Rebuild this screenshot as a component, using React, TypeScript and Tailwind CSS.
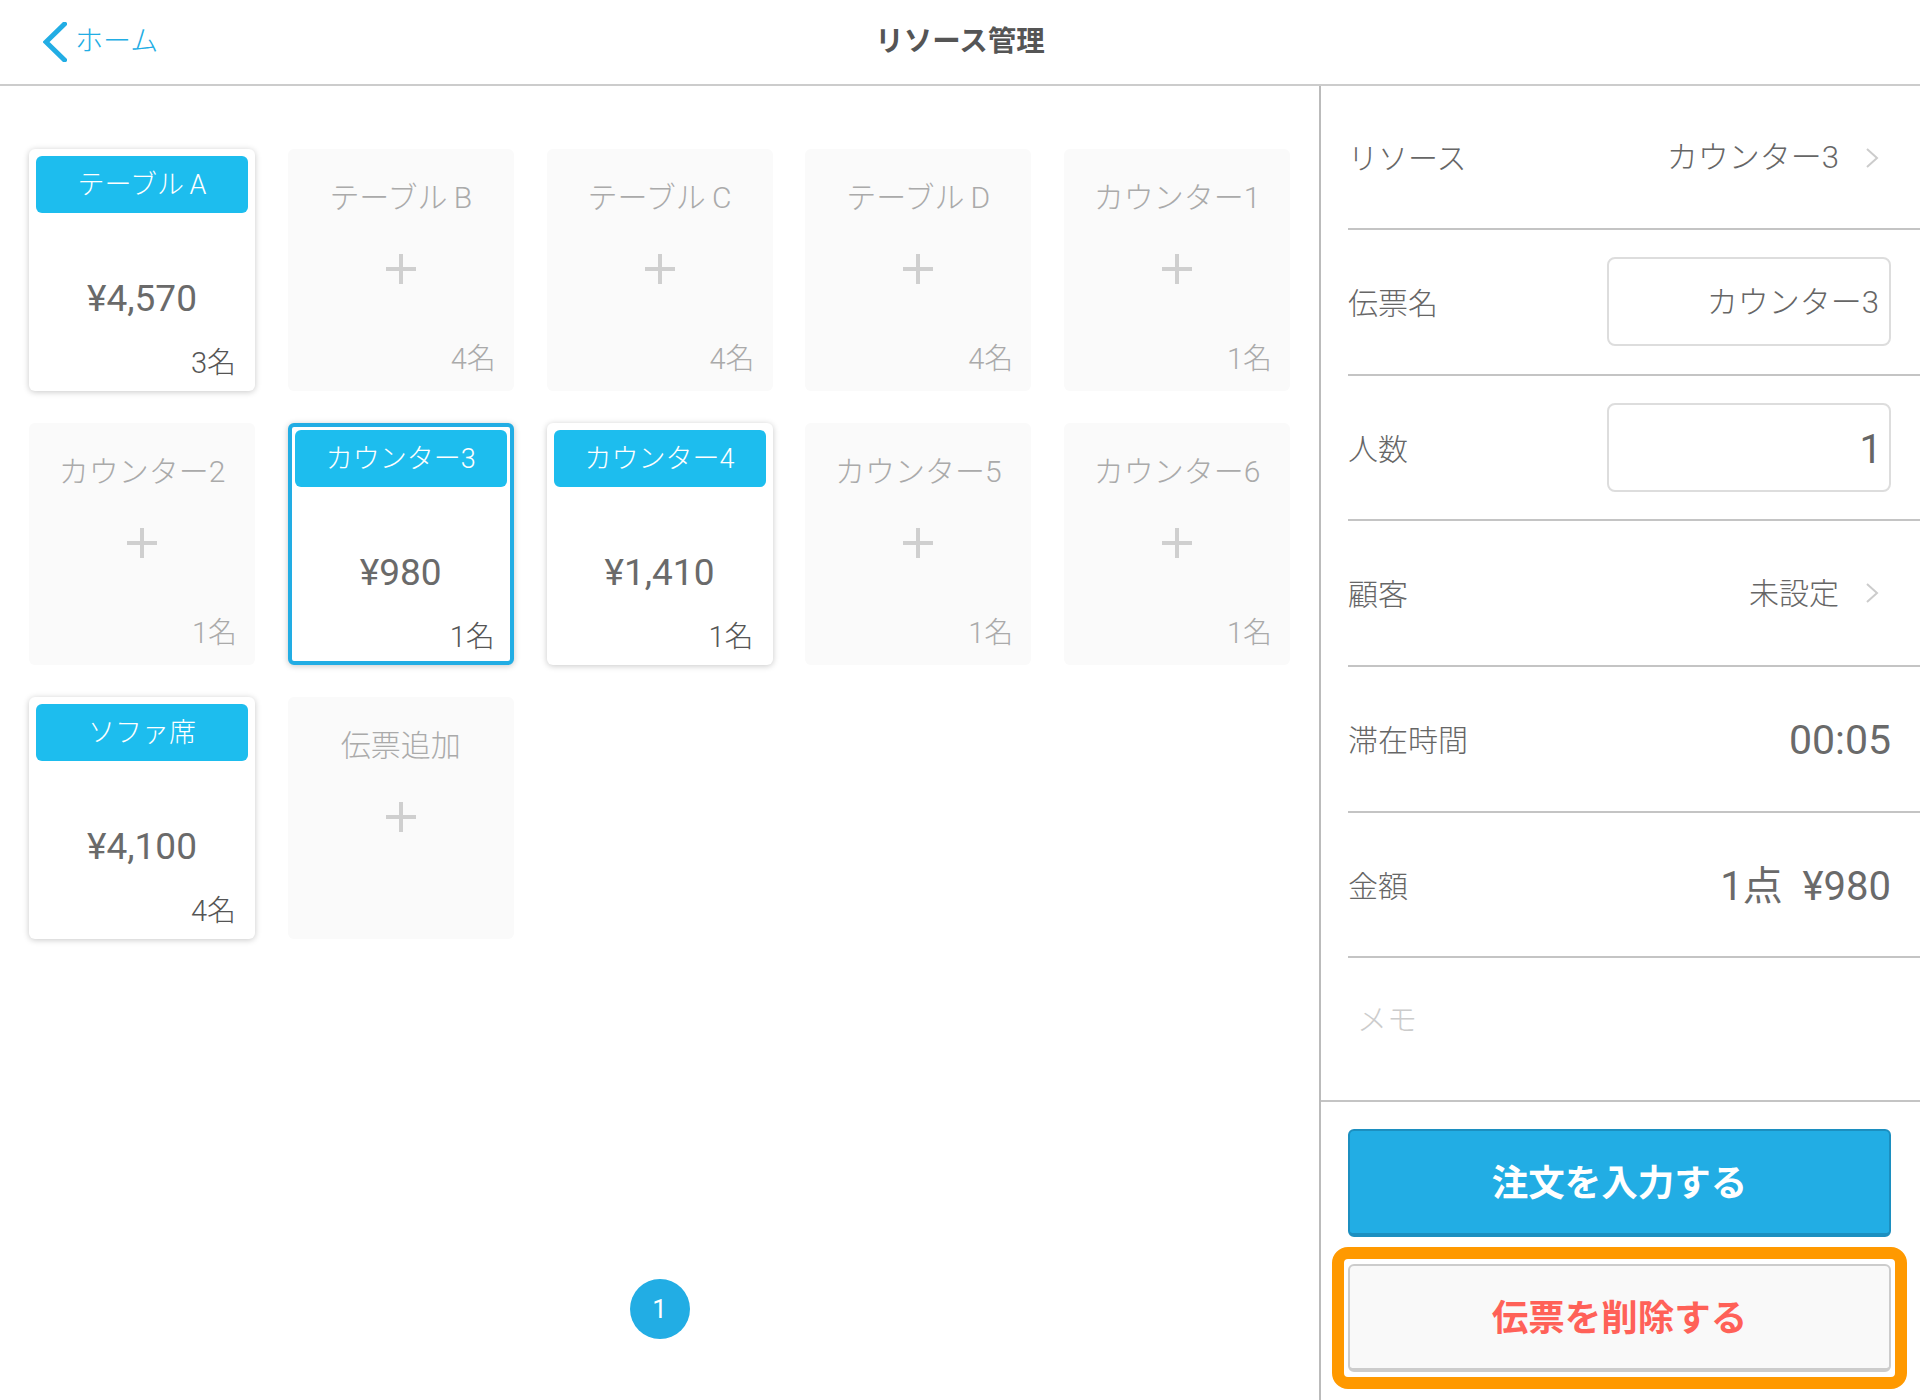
const tables = [
  { name: "テーブル\u2009A", price: "¥4,570", count: "3名" },
  { name: "テーブル\u2009B", count: "4名" },
  { name: "テーブル\u2009C", count: "4名" },
  { name: "テーブル\u2009D", count: "4名" },
  { name: "カウンター1", count: "1名" },
  { name: "カウンター2", count: "1名" },
  { name: "カウンター3", price: "¥980", count: "1名", selected: true },
  { name: "カウンター4", price: "¥1,410", count: "1名" },
  { name: "カウンター5", count: "1名" },
  { name: "カウンター6", count: "1名" },
  { name: "ソファ席", price: "¥4,100", count: "4名" },
  { name: "伝票追加", count: "" },
]

function Plus() {
  return (
    <svg width="30" height="30" viewBox="0 0 30 30" className="mx-auto mt-9 shrink-0">
      <path d="M15 0v30M0 15h30" stroke="#cfcfcf" strokeWidth="4" />
    </svg>
  )
}

function Card({ name, price, count, selected }: { name: string; price?: string; count: string; selected?: boolean }) {
  if (!price) {
    return (
      <div className="flex h-[242px] flex-col rounded-md bg-[#fafafa] pt-[29px]">
        <div className="text-center text-[30px] leading-10 text-[#aaaaaa]">{name}</div>
        <Plus />
        <div className="mt-auto mb-3 h-10 pr-[18px] text-right text-[29px] leading-10 text-[#aaaaaa]">{count}</div>
      </div>
    )
  }
  return (
    <div
      className={`flex h-[242px] flex-col rounded-md bg-white shadow-[0_1px_6px_rgba(0,0,0,0.22)] ${
        selected ? "border-4 border-[#22ade4] p-[3px]" : "p-[7px]"
      }`}
    >
      <div className="flex h-[57px] shrink-0 items-center justify-center rounded-md bg-[#1dbdee] pt-[2px] text-[27px] text-white">
        {name}
      </div>
      <div className="mt-[64px] text-center text-[37px] font-normal leading-[44px] text-[#6a6a6a]">{price}</div>
      <div className="mt-[22px] pr-3 text-right text-[29px] leading-10 text-[#555555]">{count}</div>
    </div>
  )
}

function Chevron() {
  return (
    <svg width="14" height="22" viewBox="0 0 14 22" className="ml-[26px] mr-3" fill="none">
      <path d="M2 2l10 9-10 9" stroke="#cccccc" strokeWidth="2" />
    </svg>
  )
}

function Row({ label, children, className = "h-[145.7px]" }: { label: string; children: React.ReactNode; className?: string }) {
  return (
    <div className={`flex items-center justify-between border-b-2 border-[#c4c4c4] pr-[29px] ${className}`}>
      <span className="pt-[3px] text-[30px] text-[#666666]">{label}</span>
      {children}
    </div>
  )
}

function InputBox({ value, big }: { value: string; big?: boolean }) {
  return (
    <div
      className={`flex h-[89px] w-[284px] items-center justify-end rounded-lg border-2 border-[#dddddd] text-[#666666] ${
        big ? "pr-[7px] pt-1 text-[40px] font-normal" : "pr-[10px] pt-[2px] text-[31px]"
      }`}
    >
      {value}
    </div>
  )
}

export default function App() {
  return (
    <div className="flex h-[1400px] w-[1920px] flex-col overflow-hidden bg-white font-['Roboto','Noto_Sans_CJK_JP',sans-serif] font-light">
      <header className="grid h-[86px] shrink-0 grid-cols-3 items-center border-b-2 border-[#cccccc]">
        <div className="flex items-center pl-[43px] text-[28px] text-[#22ade4]">
          <svg width="24" height="40" viewBox="0 0 24 40" fill="none">
            <path d="M21.5 2L3 20l18.5 18" stroke="#22ade4" strokeWidth="5" strokeLinecap="round" />
          </svg>
          <span className="ml-2">ホーム</span>
        </div>
        <div className="text-center text-[28.5px] font-bold text-[#555555]">リソース管理</div>
      </header>

      <div className="flex min-h-0 flex-1">
        <main className="flex w-[1319px] shrink-0 flex-col pl-[29px] pt-[63px]">
          <div className="grid grid-cols-[repeat(5,226px)] gap-x-[32.75px] gap-y-8">
            {tables.map((t) => (
              <Card key={t.name} {...t} />
            ))}
          </div>
          <div className="mt-auto mb-[61px] flex justify-center pr-[29px]">
            <div className="flex h-[60px] w-[60px] items-center justify-center rounded-full bg-[#22ade4] text-[26px] font-normal text-white">
              1
            </div>
          </div>
        </main>

        <aside className="flex w-[601px] flex-col border-l-2 border-[#bbbbbb]">
          <div className="h-[1016px] shrink-0 border-b-2 border-[#c4c4c4] pl-[27px]">
            <Row label="リソース" className="h-[144px]">
              <span className="flex items-center pt-[2px] text-[31px] text-[#666666]">
                カウンター3
                <Chevron />
              </span>
            </Row>
            <Row label="伝票名">
              <InputBox value="カウンター3" />
            </Row>
            <Row label="人数">
              <InputBox value="1" big />
            </Row>
            <Row label="顧客">
              <span className="flex items-center text-[30px] text-[#666666]">
                未設定
                <Chevron />
              </span>
            </Row>
            <Row label="滞在時間">
              <span className="pt-1 text-[41px] font-normal text-[#6a6a6a]">00:05</span>
            </Row>
            <Row label="金額">
              <span className="pt-1 text-[40px] font-normal text-[#6a6a6a]">1点&nbsp;&nbsp;¥980</span>
            </Row>
            <div className="pl-[9px] pt-[39px] text-[30px] text-[#cccccc]">メモ</div>
          </div>

          <div className="pl-[27px] pr-[29px] pt-[27px]">
            <button className="flex h-[108px] w-full items-center justify-center rounded-md border-2 border-b-4 border-[#1c8fc0] bg-[#22ade4] pt-1 text-[36.5px] font-bold text-white">
              注文を入力する
            </button>
            <div className="relative mt-[27px]">
              <button className="flex h-[108px] w-full items-center justify-center rounded-md border-2 border-b-4 border-[#cccccc] bg-[#f9f9f9] pt-1 text-[36.5px] font-bold text-[#ff6158]">
                伝票を削除する
              </button>
              <div className="absolute -inset-x-4 -inset-y-[17px] rounded-2xl border-[12px] border-[#ff9900]" />
            </div>
          </div>
        </aside>
      </div>
    </div>
  )
}
